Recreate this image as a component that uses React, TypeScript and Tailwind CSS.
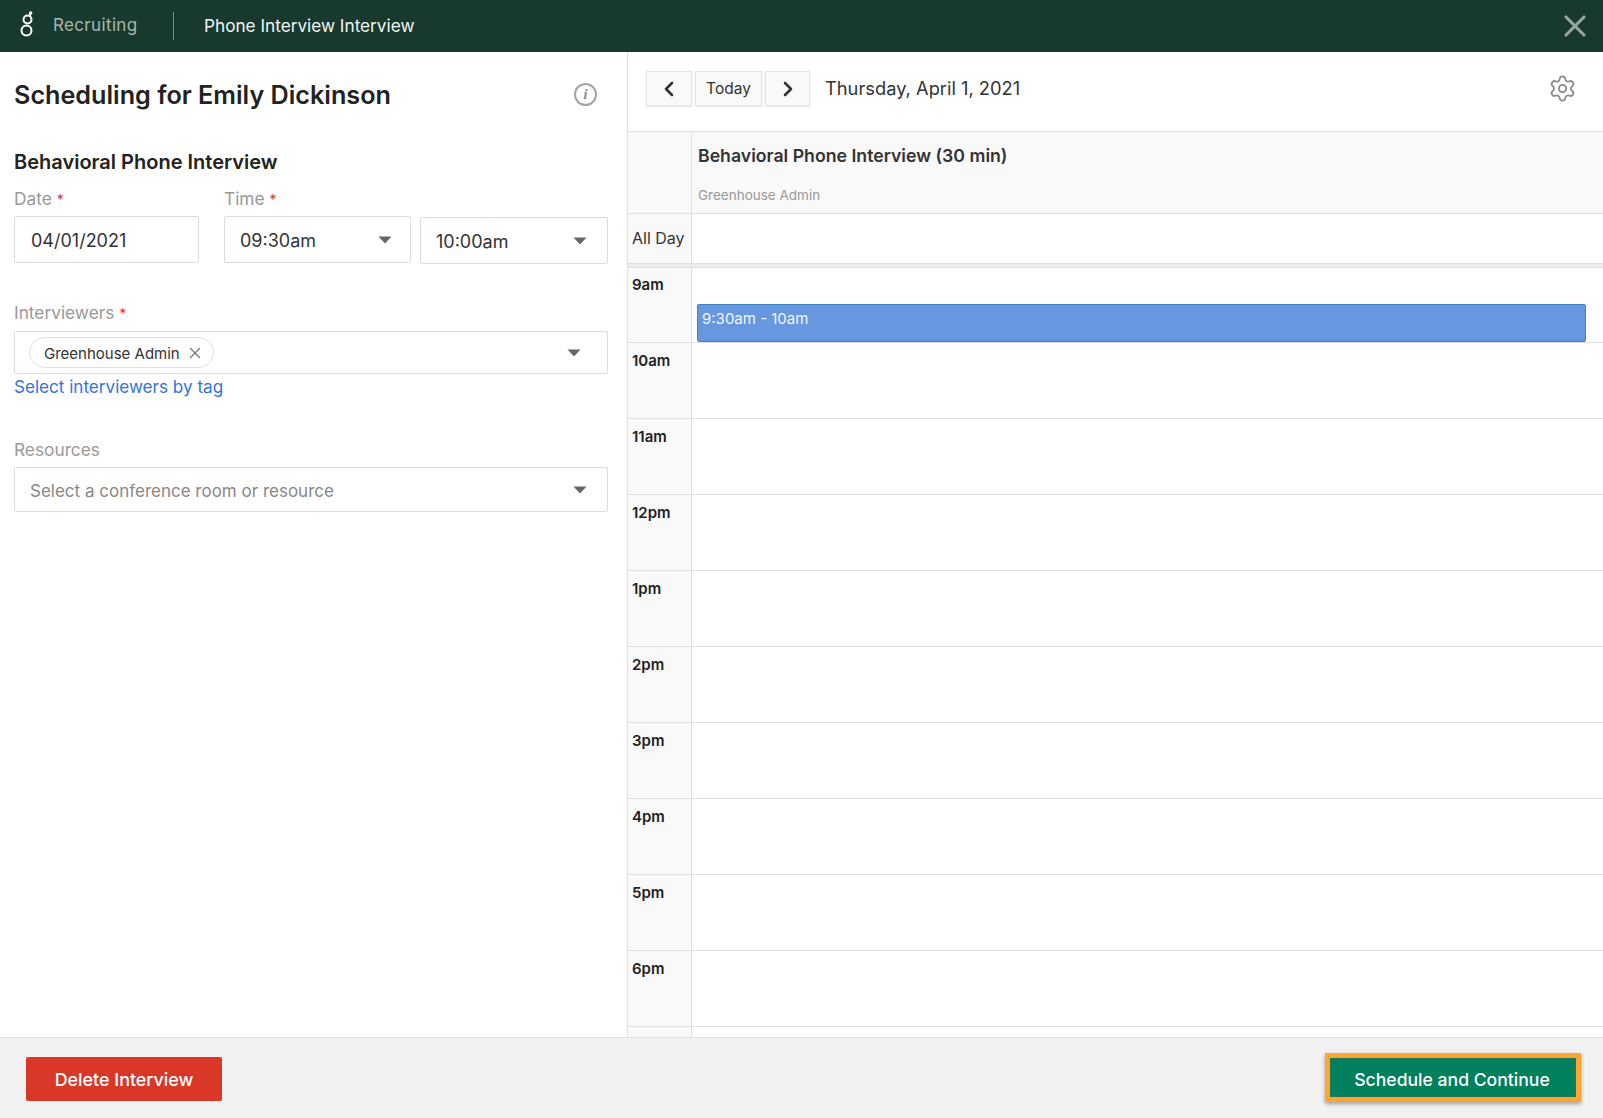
import { ChevronLeft, ChevronRight, Settings, X } from "lucide-react";

const hours = ["9am", "10am", "11am", "12pm", "1pm", "2pm", "3pm", "4pm", "5pm", "6pm"];

function Caret() {
    return (
        <svg width="14" height="8" viewBox="0 0 14 8" className="shrink-0">
            <path d="M0.5 0.5 H13.5 L7 7.5 Z" fill="#666666" />
        </svg>
    );
}

function Required({ children }: { children: string }) {
    return (
        <div className="text-[17.3px] leading-[24px] text-[#999999]">
            {children} <span className="text-[#d9372a] text-[14px]">*</span>
        </div>
    );
}

function Logo() {
    return (
        <svg width="14" height="30" viewBox="0 0 14 30" fill="none" stroke="#ffffff" strokeWidth="2">
            <circle cx="7.5" cy="8.5" r="4" />
            <circle cx="6.5" cy="19.5" r="5" />
            <path d="M9.5 5 L10.4 3" />
            <circle cx="10.7" cy="2" r="1.7" fill="#ffffff" stroke="none" />
        </svg>
    );
}

export default function App() {
    return (
        <div className="h-[1118px] w-full flex flex-col bg-white overflow-hidden font-['Inter',sans-serif] text-[#222222]">
            {/* Header */}
            <div className="h-[52px] shrink-0 bg-[#183a2e] flex items-center pl-[20px] pr-[10px]">
                <Logo />
                <div className="ml-[19px] w-[120px] text-[17px] tracking-[0.35px] text-[#a9b5b0]">Recruiting</div>
                <div className="w-[1px] h-[28px] bg-[#7d8c86]" />
                <div className="ml-[30px] text-[17.2px] text-[#f2f5f3]">Phone Interview Interview</div>
                <X className="ml-auto text-[#9aa5a0]" size={36} strokeWidth={2.1} />
            </div>

            <div className="flex-1 flex min-h-0">
                {/* Left form */}
                <div className="w-[628px] shrink-0 border-r border-[#e0e0e0] pl-[14px] pr-[19px]">
                    <div className="flex items-center justify-between h-[30px] mt-[29px]">
                        <h1 className="text-[25.2px] font-semibold text-[#222222]">Scheduling for Emily Dickinson</h1>
                        <div className="mr-[11px] mb-[4px] w-[23px] h-[23px] rounded-full border-2 border-[#a3a3a3] flex items-center justify-center font-['Liberation_Serif',serif] italic font-bold text-[14px] text-[#8a8a8a]">
                            i
                        </div>
                    </div>
                    <h2 className="mt-[37px] text-[20px] leading-[28px] font-semibold">Behavioral Phone Interview</h2>

                    <div className="flex mt-[11px]">
                        <div className="w-[186px] mr-[25px]">
                            <Required>Date</Required>
                            <div className="mt-[4px] h-[47px] pt-[1px] border border-[#dddddd] rounded-[2px] flex items-center pl-[16px] text-[18px] text-[#333333]">
                                04/01/2021
                            </div>
                        </div>
                        <div className="flex-1">
                            <Required>Time</Required>
                            <div className="flex gap-[9px] mt-[4px]">
                                <div className="w-[187px] h-[47px] border border-[#dddddd] rounded-[2px] flex items-center justify-between pl-[15px] pr-[18px] text-[18px] text-[#333333]">
                                    <span className="pt-[2px]">09:30am</span>
                                    <Caret />
                                </div>
                                <div className="w-[188px] h-[47px] mt-[1px] border border-[#dddddd] rounded-[2px] flex items-center justify-between pl-[15px] pr-[20px] text-[18px] text-[#333333]">
                                    <span className="pt-[2px]">10:00am</span>
                                    <Caret />
                                </div>
                            </div>
                        </div>
                    </div>

                    <div className="mt-[37px]">
                        <Required>Interviewers</Required>
                    </div>
                    <div className="mt-[5px] h-[43px] border border-[#dddddd] rounded-[2px] flex items-center justify-between pl-[14px] pr-[26px]">
                        <div className="h-[31px] w-[185px] border border-[#e0e0e0] rounded-full flex items-center pl-[14px] text-[15px] text-[#333333]">
                            <span className="pt-[3px]">Greenhouse Admin</span>
                            <X className="ml-[6px] mt-[1px] text-[#777777]" size={18} strokeWidth={1.6} />
                        </div>
                        <Caret />
                    </div>
                    <div className="mt-[1px] text-[17.1px] leading-[24px] text-[#2f74e0]">Select interviewers by tag</div>

                    <div className="mt-[39px] text-[17.3px] leading-[24px] text-[#999999]">Resources</div>
                    <div className="mt-[5px] h-[45px] border border-[#dddddd] rounded-[2px] flex items-center justify-between pl-[15px] pr-[20px] text-[17px] text-[#888888]">
                        <span className="pt-[4px]">Select a conference room or resource</span>
                        <Caret />
                    </div>
                </div>

                {/* Calendar */}
                <div className="flex-1 min-w-0 flex flex-col">
                    <div className="h-[79px] shrink-0 flex items-center pl-[18px] pr-[26px] pb-[6px]">
                        <div className="flex gap-[3px] text-[#333333]">
                            <div className="w-[46px] h-[35px] bg-[#f9f9f9] border border-[#e4e4e4] shadow-[0_1px_2px_rgba(0,0,0,0.1)] flex items-center justify-center">
                                <ChevronLeft size={24} strokeWidth={2.6} />
                            </div>
                            <div className="w-[67px] h-[35px] bg-[#f9f9f9] border border-[#e4e4e4] shadow-[0_1px_2px_rgba(0,0,0,0.1)] flex items-center justify-center text-[15.5px]">
                                Today
                            </div>
                            <div className="w-[45px] h-[35px] bg-[#f9f9f9] border border-[#e4e4e4] shadow-[0_1px_2px_rgba(0,0,0,0.1)] flex items-center justify-center">
                                <ChevronRight size={24} strokeWidth={2.6} />
                            </div>
                        </div>
                        <div className="ml-[15px] pt-[1px] text-[18.3px] text-[#333333]">Thursday, April 1, 2021</div>
                        <Settings className="ml-auto text-[#8c8c8c]" size={29} strokeWidth={1.5} />
                    </div>

                    <div className="h-[82px] shrink-0 flex border-t border-[#e0e0e0] bg-[#f9f9f9]">
                        <div className="w-[64px] border-r border-[#e0e0e0]" />
                        <div className="pl-[6px]">
                            <div className="mt-[12px] text-[17.7px] leading-[24px] font-semibold text-[#333333]">Behavioral Phone Interview (30 min)</div>
                            <div className="mt-[18px] text-[13.5px] leading-[18px] text-[#999999]">Greenhouse Admin</div>
                        </div>
                    </div>

                    <div className="h-[50px] shrink-0 flex border-t border-[#e0e0e0]">
                        <div className="w-[64px] bg-[#f9f9f9] border-r border-[#e0e0e0] pl-[4px] pt-[13px] text-[16px] leading-[22px] text-[#333333]">All Day</div>
                    </div>
                    <div className="h-[5px] shrink-0 bg-[#ededed] border-y border-[#e0e0e0]" />

                    <div className="flex-1 min-h-0 overflow-hidden">
                        {hours.map((hour, i) => (
                            <div key={hour} className={`flex ${i === 0 ? "h-[75px]" : "h-[76px]"} border-b border-[#e0e0e0]`}>
                                <div className={`w-[64px] shrink-0 bg-[#f9f9f9] border-r border-[#e0e0e0] pl-[4px] ${i === 0 ? "pt-[7px]" : "pt-[8px]"} text-[15px] leading-[20px] font-semibold text-[#222222]`}>
                                    {hour}
                                </div>
                                {i === 0 && (
                                    <div className="flex-1 flex items-end pl-[5px] pr-[17px]">
                                        <div className="w-full h-[38px] bg-[#6697df] border border-[#3d83bd] rounded-[2px] pl-[4px] pt-[4px] text-[15px] leading-[20px] text-[#f2f6fc]">
                                            9:30am - 10am
                                        </div>
                                    </div>
                                )}
                            </div>
                        ))}
                        <div className="flex h-[20px]">
                            <div className="w-[64px] shrink-0 bg-[#f9f9f9] border-r border-[#e0e0e0]" />
                        </div>
                    </div>
                </div>
            </div>

            {/* Footer */}
            <div className="h-[81px] shrink-0 bg-[#f2f2f2] border-t border-[#e0e0e0] flex items-start justify-between pl-[26px] pr-[22px] pt-[15px]">
                <button className="mt-[4px] w-[196px] h-[44px] pt-[2px] bg-[#d93829] rounded-[2px] text-white text-[17.9px] font-medium">
                    Delete Interview
                </button>
                <button className="w-[256px] h-[49px] pt-[5px] pr-[2px] bg-[#00805c] border-[5px] border-[#ffa530] shadow-[0_2px_4px_rgba(0,0,0,0.35),inset_0_0_0_1px_#1d7a5a] text-white text-[17.6px] font-medium">
                    Schedule and Continue
                </button>
            </div>
        </div>
    );
}
